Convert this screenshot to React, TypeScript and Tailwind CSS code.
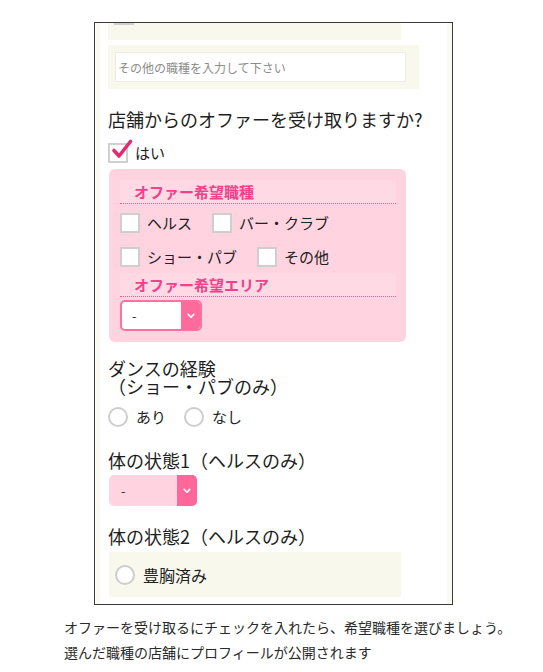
import React from 'react';

const font = { fontFamily: '"Noto Sans CJK JP", "Noto Sans", sans-serif' };

function Box({ checked = false }: { checked?: boolean }) {
  return (
    <span className="relative inline-block w-[20px] h-[20px] shrink-0 border-2 border-[#cfcfcf] bg-white">
      {checked && (
        <svg
          className="absolute left-[1px] top-[-6px]"
          width="22"
          height="22"
          viewBox="0 0 22 22"
          fill="none"
        >
          <path
            d="M3 11.5 L8 17 L19.5 2.5"
            stroke="#e52a6f"
            strokeWidth="3.6"
            strokeLinecap="round"
            strokeLinejoin="round"
          />
        </svg>
      )}
    </span>
  );
}

function Radio() {
  return <span className="inline-block w-[20px] h-[20px] shrink-0 rounded-full border-2 border-[#cdcdcd] bg-white" />;
}

function Chevron() {
  return (
    <svg width="8" height="6" viewBox="0 0 8 6" fill="none">
      <path d="M1.2 1.4 L4 4.2 L6.8 1.4" stroke="#fff" strokeWidth="1.6" strokeLinecap="round" strokeLinejoin="round" />
    </svg>
  );
}

function Option({ label, checked }: { label: string; checked?: boolean }) {
  return (
    <label className="flex items-center gap-[7px] h-[20px] text-[15px] text-[#222]">
      <Box checked={checked} />
      <span className="leading-[20px]">{label}</span>
    </label>
  );
}

function SubHead({ children }: { children: React.ReactNode }) {
  return (
    <div className="h-[24px] w-[276px] bg-[#ffd9e4] border-b border-dotted border-[#f0589a] pl-[14px] text-[15px] font-bold leading-[23px] text-[#f2408b]">
      {children}
    </div>
  );
}

export default function App() {
  return (
    <div className="w-[543px] h-[672px] bg-white overflow-hidden" style={font}>
      <div className="ml-[94px] mt-[22px] w-[359px] h-[583px] border border-[#3a3a3a] overflow-hidden flex">
        <div className="w-px" />
        <div className="w-[4px] bg-[#fafaf1]" />
        <main className="flex-1 pl-2 flex flex-col items-start">
          {/* scrolled past: only the bottom of this row shows */}
          <div className="mt-[-23px] h-[40px] w-[293px] bg-[#f8f8ec] pt-[5px] pl-[6px]">
            <Option label="その他" />
          </div>

          <div className="mt-[5px] h-[44px] w-[311px] bg-[#f8f8ec] pt-[7px] pl-[7px]">
            <input
              readOnly
              placeholder="その他の職種を入力して下さい"
              className="block h-[30px] w-[291px] border border-[#ececE4] bg-white pl-[2px] text-[12px] outline-none placeholder:text-[#8c8c8c]"
              style={font}
            />
          </div>

          <h2 className="mt-[17px] text-[18px] leading-[26px] font-normal text-[#1e1e1e]">
            店舗からのオファーを受け取りますか?
          </h2>

          <div className="mt-[11px]">
            <Option label="はい" checked />
          </div>

          <section className="mt-[6px] ml-px w-[297px] rounded-[6px] bg-[#ffd4e0] p-[11px] pr-[10px]">
            <SubHead>オファー希望職種</SubHead>
            <div className="mt-[9px] flex gap-[20px]">
              <Option label="ヘルス" />
              <Option label="バー・クラブ" />
            </div>
            <div className="mt-[14px] flex gap-[20px]">
              <Option label="ショー・パブ" />
              <Option label="その他" />
            </div>
            <div className="mt-[6px]">
              <SubHead>オファー希望エリア</SubHead>
            </div>
            <div className="mt-[3px] flex h-[31px] w-[82px] overflow-hidden rounded-[5px] border-2 border-[#ff6f9f] bg-white">
              <span className="flex-1 pl-[10px] text-[13px] leading-[27px] text-[#333]">-</span>
              <span className="flex w-[19px] items-center justify-center bg-[#ff6a9c]">
                <Chevron />
              </span>
            </div>
          </section>

          <h2 className="mt-[17px] text-[18px] leading-[18px] font-normal text-[#1e1e1e]">
            ダンスの経験
            <br />
            （ショー・パブのみ）
          </h2>

          <div className="mt-[12px] flex items-center gap-[18px] text-[15px] text-[#222]">
            <label className="flex items-center gap-[8px]">
              <Radio />
              <span className="leading-[20px]">あり</span>
            </label>
            <label className="flex items-center gap-[8px]">
              <Radio />
              <span className="leading-[20px]">なし</span>
            </label>
          </div>

          <h2 className="mt-[20px] text-[18px] leading-[26px] font-normal text-[#1e1e1e]">
            体の状態1（ヘルスのみ）
          </h2>

          <div className="mt-[2px] ml-px flex h-[31px] w-[88px] overflow-hidden rounded-[5px] bg-[#ffd4e0]">
            <span className="flex-1 pl-[12px] text-[13px] leading-[31px] text-[#333]">-</span>
            <span className="flex w-[20px] items-center justify-center bg-[#ff6699]">
              <Chevron />
            </span>
          </div>

          <h2 className="mt-[17px] text-[18px] leading-[26px] font-normal text-[#1e1e1e]">
            体の状態2（ヘルスのみ）
          </h2>

          <div className="mt-[3px] ml-px h-[45px] w-[292px] bg-[#f8f8ec] pt-[13px] pl-[6px]">
            <label className="flex items-center gap-[8px] text-[16px] text-[#222]">
              <Radio />
              <span className="leading-[20px]">豊胸済み</span>
            </label>
          </div>
        </main>
        <div className="w-[5px] bg-[#fafaf1]" />
      </div>

      <p className="mt-[10px] ml-[64px] text-[14px] leading-[25px] text-[#2a2a2a]">
        オファーを受け取るにチェックを入れたら、希望職種を選びましょう。
        <br />
        選んだ職種の店舗にプロフィールが公開されます
      </p>
    </div>
  );
}
